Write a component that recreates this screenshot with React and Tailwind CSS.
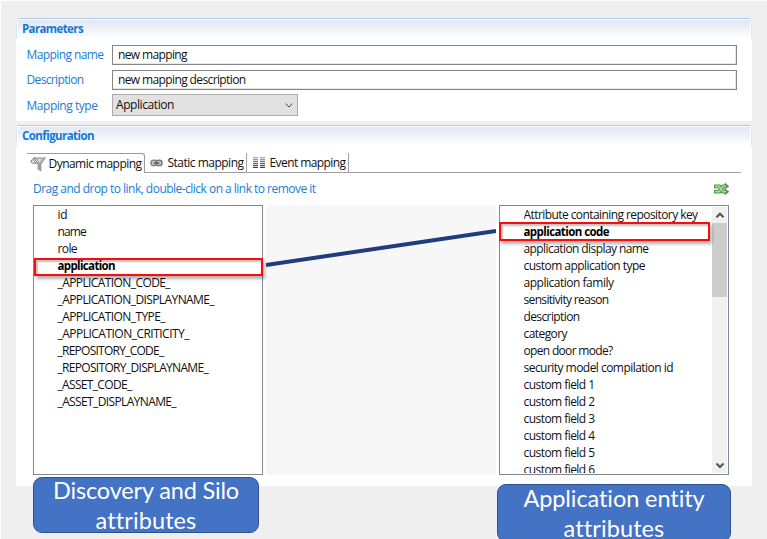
import { useLayoutEffect, useRef } from "react";

// Text that spreads its letters to occupy a fixed width.
function Fit({ w, className = "", children }) {
  const ref = useRef(null);
  useLayoutEffect(() => {
    const el = ref.current;
    el.style.letterSpacing = "0px";
    const natural = el.getBoundingClientRect().width;
    el.style.letterSpacing = (w - natural) / children.length + "px";
  }, [w, children]);
  return (
    <span ref={ref} className={`inline-block whitespace-pre ${className}`}>
      {children}
    </span>
  );
}

const sources = [
  ["id", 10],
  ["name", 28.5],
  ["role", 19.5],
  ["application", 57.5, true],
  ["_APPLICATION_CODE_", 112.5],
  ["_APPLICATION_DISPLAYNAME_", 156.5],
  ["_APPLICATION_TYPE_", 107.5],
  ["_APPLICATION_CRITICITY_", 131.5],
  ["_REPOSITORY_CODE_", 106],
  ["_REPOSITORY_DISPLAYNAME_", 150.5],
  ["_ASSET_CODE_", 74],
  ["_ASSET_DISPLAYNAME_", 118.5],
];

const targets = [
  ["Attribute containing repository key", 174],
  ["application code", 85.5, true],
  ["application display name", 125],
  ["custom application type", 121.5],
  ["application family", 90],
  ["sensitivity reason", 85],
  ["description", 56],
  ["category", 43.5],
  ["open door mode?", 89],
  ["security model compilation id", 149.5],
  ["custom field 1", 71],
  ["custom field 2", 71],
  ["custom field 3", 71],
  ["custom field 4", 71],
  ["custom field 5", 71],
  ["custom field 6", 71],
];

function Rows({ items }) {
  return items.map(([label, w, bold]) => (
    <div key={label} className="h-[17px] shrink-0 leading-[17px]">
      <Fit w={w} className={bold ? "text-[11.5px] font-bold text-black" : ""}>{label}</Fit>
    </div>
  ));
}

function PanelHeader({ title, w }) {
  return (
    <div className="h-[21px] shrink-0 rounded-t-[3px] border-x border-t border-x-[#dce8f5] border-t-[#b4cae2] bg-linear-to-b from-[#dfe7f2] to-white pl-[5px] text-[11.5px] font-bold leading-[19px] text-[#0f7ad8] shadow-[inset_1px_1px_0_white,inset_-1px_0_0_white]">
      <Fit w={w}>{title}</Fit>
    </div>
  );
}

function Chevron({ up, className = "" }) {
  return (
    <svg width="10" height="7" viewBox="0 0 10 7" className={className} fill="none" stroke="currentColor">
      <path d={up ? "M1.5 5.2 5 1.7 8.5 5.2" : "M1.5 1.5 5 5 8.5 1.5"} />
    </svg>
  );
}

function FunnelIcon() {
  return (
    <svg width="16" height="16" viewBox="0 0 16 16" className="shrink-0" fill="none">
      <path d="M4 2h11L10.7 8v6.5L8.2 13V8z" fill="#cfced6" stroke="#92909b" strokeWidth="1.2" />
      <path d="M5.5 3.4h8L9.6 7.5z" fill="#e8e8ee" />
      <path d="M6.5 2.5 9.6 7.5 12.5 2.5M9.5 7.5v6" stroke="#9a98a4" strokeWidth="1" />
      <path d="M4.8 1.6 1 5.2l1.2 1.7 4.3.3" stroke="#85838c" strokeWidth="1.1" />
      <path d="M3.3 4 6.5 8" stroke="#85838c" strokeWidth="1" />
    </svg>
  );
}

function LinkIcon() {
  return (
    <svg width="13" height="8" viewBox="0 0 13 8" className="shrink-0" fill="none">
      <rect x="1" y="1.2" width="6" height="5.3" rx="2.6" fill="#d0d0d0" stroke="#858585" strokeWidth="1.5" />
      <rect x="6" y="1.2" width="6" height="5.3" rx="2.6" fill="#d0d0d0" stroke="#777" strokeWidth="1.5" />
      <path d="M3.5 4h6" stroke="#555" strokeWidth="1.4" />
    </svg>
  );
}

function ColumnsIcon() {
  return (
    <svg width="12" height="12" viewBox="0 0 12 12" className="shrink-0" shapeRendering="crispEdges">
      <path d="M0 0h5v11H0zM7 0h5v11H7z" fill="#d9d9d9" />
      {["#b2b2b2", "#999", "#808080", "#686868", "#505050"].map((c, i) => (
        <path key={c} d={`M0 ${i * 2 + 0.5}h5M7 ${i * 2 + 0.5}h5`} stroke={c} strokeWidth="1" />
      ))}
      <path d="M0 10.5h5M7 10.5h5" stroke="#3c3c3c" />
    </svg>
  );
}

function ShuffleIcon() {
  return (
    <svg width="16" height="14" viewBox="0 0 16 14" fill="none">
      <path d="M0 4.3h5.2L9 9.7h3M0 9.7h5.2L9 4.3h3" stroke="#4c9a48" strokeWidth="3.8" />
      <path d="M10.8.8 15.2 4.3l-4.4 3.2zM10.8 6.5l4.4 3.2-4.4 3.5z" fill="#3b8a37" />
      <path d="M1 4.3h4.2L9 9.7h3.6M1 9.7h4.2L9 4.3h3.6" stroke="#a6d89b" strokeWidth="1.7" />
    </svg>
  );
}

function Field({ label, w, value, vw, className }) {
  return (
    <div className={`flex h-5 ${className}`}>
      <div className="w-[85.5px] shrink-0 leading-5 text-[#1c7cd6]">
        <Fit w={w}>{label}</Fit>
      </div>
      <div className="h-5 grow border border-[#858585] bg-white pl-[5px] leading-[18px] shadow-[inset_-1px_-1px_0_#e6e6e6]">
        <Fit w={vw}>{value}</Fit>
      </div>
    </div>
  );
}

export default function App() {
  return (
    <div className="relative h-[539px] w-[767px] overflow-hidden border-l border-t border-white bg-[#efefef] pl-[15px] pt-[17px] font-['Open_Sans','Noto_Sans',sans-serif] text-[12px] text-[#111]">
      <section className="flex h-[103px] w-[736px] flex-col bg-white">
        <PanelHeader title="Parameters" w={61} />
        <div className="pl-[10.5px] pr-[15px] pt-[6px]">
          <Field label="Mapping name" w={77} value="new mapping" vw={69} className="mb-[5px]" />
          <Field label="Description" w={57} value="new mapping description" vw={127.5} className="mb-[4px]" />
          <div className="flex h-[22px]">
            <div className="w-[85.5px] leading-[23px] text-[#1c7cd6]">
              <Fit w={71}>Mapping type</Fit>
            </div>
            <div className="flex w-[186px] items-center justify-between border border-[#acacac] bg-[#e1e1e1] pl-[3px] pr-[3px]">
              <Fit w={58}>Application</Fit>
              <Chevron className="text-[#444]" />
            </div>
          </div>
        </div>
      </section>

      <section className="mt-1 flex h-[361px] w-[736px] flex-col bg-white">
        <PanelHeader title="Configuration" w={72} />
        <div className="ml-[11px] mr-[11px] mt-[7px] flex h-5 leading-[20px]">
          <div className="flex w-[118px] shrink-0 items-center rounded-tr-[3px] border-r border-t border-[#9c9c9c] pl-[3px]">
            <FunnelIcon />
            <Fit w={93} className="ml-[2.5px]">Dynamic mapping</Fit>
          </div>
          <div className="flex grow border-b border-[#a0a0a0]">
            <div className="flex w-[102px] items-center border-r border-[#a0a0a0] pl-[5px]">
              <LinkIcon />
              <Fit w={76} className="ml-[4.5px]">Static mapping</Fit>
            </div>
            <div className="flex w-[102px] items-center border-r border-[#a0a0a0] pl-[6px]">
              <ColumnsIcon />
              <Fit w={76} className="ml-[4.5px]">Event mapping</Fit>
            </div>
          </div>
        </div>

        <div className="mx-[17px] mr-[22px] flex h-8 items-center justify-between text-[#1c7cd6]">
          <Fit w={282.5}>Drag and drop to link, double-click on a link to remove it</Fit>
          <ShuffleIcon />
        </div>

        <div className="ml-[17px] mr-[23px] flex h-[270px] gap-[3px]">
          <div className="w-[230px] border border-[#828790] pl-[23.5px]">
            <Rows items={sources} />
          </div>
          <svg width="230" height="270" className="bg-[#f7f7f7]">
            <path d="M0 60 230 26" stroke="#1f3d7c" strokeWidth="4" />
          </svg>
          <div className="flex w-[230px] justify-between border border-[#828790] pr-px pl-[23.5px]">
            <div className="flex h-[267px] flex-col overflow-hidden">
              <Rows items={targets} />
            </div>
            <div className="my-px flex w-[15px] flex-col items-center bg-[#f0f0f0]">
              <div className="flex h-[16px] items-center">
                <Chevron up className="stroke-2 text-[#505050]" />
              </div>
              <div className="h-[74px] w-[15px] bg-[#cdcdcd]" />
              <div className="mt-auto flex h-[16px] items-center">
                <Chevron className="stroke-2 text-[#505050]" />
              </div>
            </div>
          </div>
        </div>
      </section>

      {/* Highlight frames and captions drawn over the form */}
      <div className="absolute left-[33px] top-[257px] h-[18px] w-[229px] border-2 border-[#f80c0c] shadow-[2px_3px_3px_rgba(0,0,0,0.3),inset_2px_2px_2px_rgba(0,0,0,0.25)]" />
      <div className="absolute left-[498px] top-[221px] h-[19px] w-[211px] border-2 border-[#f80c0c] shadow-[2px_3px_3px_rgba(0,0,0,0.3),inset_2px_2px_2px_rgba(0,0,0,0.25)]" />
      <div className="absolute left-[32px] top-[476px] flex h-[56px] w-[226px] flex-col items-center rounded-[9px] border border-[#2f528f] bg-[#4472c4] font-['Lato',sans-serif] text-[23.5px] leading-[30px] text-white">
        <Fit w={186} className="-mt-[3px]">Discovery and Silo</Fit>
        <Fit w={100}>attributes</Fit>
      </div>
      <div className="absolute left-[496px] top-[483px] flex h-[58px] w-[234px] flex-col items-center rounded-[9px] border border-[#2f528f] bg-[#4472c4] font-['Lato',sans-serif] text-[23.5px] leading-[30px] text-white">
        <Fit w={182} className="-mt-[2px]">Application entity</Fit>
        <Fit w={100}>attributes</Fit>
      </div>
    </div>
  );
}
